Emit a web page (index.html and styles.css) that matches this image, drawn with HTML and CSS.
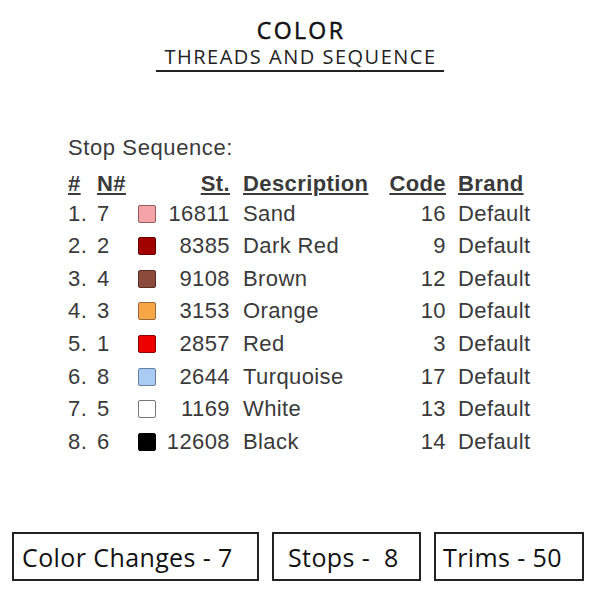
FILE: index.html
```html
<!DOCTYPE html>
<html>
<head>
<meta charset="utf-8">
<link rel="stylesheet" href="styles.css">
</head>
<body>
<div class="page">
  <header class="title">
    <div class="title-main">COLOR</div>
    <div class="title-sub">THREADS AND SEQUENCE</div>
  </header>

  <section class="seq">
    <div class="seq-label">Stop Sequence:</div>
    <div class="grid">
      <div class="h c1">#</div><div class="h c2">N#</div><div class="c3"></div><div class="h c4">St.</div><div class="h c5">Description</div><div class="h c6">Code</div><div class="h c7">Brand</div>

      <div class="c1">1.</div><div class="c2">7</div><div class="c3"><span class="sw sand"></span></div><div class="c4">16811</div><div class="c5">Sand</div><div class="c6">16</div><div class="c7">Default</div>
      <div class="c1">2.</div><div class="c2">2</div><div class="c3"><span class="sw darkred"></span></div><div class="c4">8385</div><div class="c5">Dark Red</div><div class="c6">9</div><div class="c7">Default</div>
      <div class="c1">3.</div><div class="c2">4</div><div class="c3"><span class="sw brown"></span></div><div class="c4">9108</div><div class="c5">Brown</div><div class="c6">12</div><div class="c7">Default</div>
      <div class="c1">4.</div><div class="c2">3</div><div class="c3"><span class="sw orange"></span></div><div class="c4">3153</div><div class="c5">Orange</div><div class="c6">10</div><div class="c7">Default</div>
      <div class="c1">5.</div><div class="c2">1</div><div class="c3"><span class="sw red"></span></div><div class="c4">2857</div><div class="c5">Red</div><div class="c6">3</div><div class="c7">Default</div>
      <div class="c1">6.</div><div class="c2">8</div><div class="c3"><span class="sw turq"></span></div><div class="c4">2644</div><div class="c5">Turquoise</div><div class="c6">17</div><div class="c7">Default</div>
      <div class="c1">7.</div><div class="c2">5</div><div class="c3"><span class="sw white"></span></div><div class="c4">1169</div><div class="c5">White</div><div class="c6">13</div><div class="c7">Default</div>
      <div class="c1">8.</div><div class="c2">6</div><div class="c3"><span class="sw black"></span></div><div class="c4">12608</div><div class="c5">Black</div><div class="c6">14</div><div class="c7">Default</div>
    </div>
  </section>

  <footer class="stats">
    <div class="box box-wide">Color Changes - 7</div>
    <div class="box box-mid">Stops -&nbsp; 8</div>
    <div class="box box-last">Trims - 50</div>
  </footer>
</div>
</body>
</html>
```

FILE: styles.css
```css
html, body {
  margin: 0;
  padding: 0;
  background: #ffffff;
}

.page {
  width: 600px;
  height: 600px;
  display: flex;
  flex-direction: column;
  font-family: "Open Sans", "Liberation Sans", sans-serif;
  color: #1a1a1a;
}

.title {
  display: flex;
  flex-direction: column;
  align-items: center;
  padding-top: 16px;
}

.title-main {
  font-size: 23px;
  line-height: 28px;
  font-weight: 400;
  color: #111;
  -webkit-text-stroke: 0.5px #111;
  letter-spacing: 2.4px;
  padding-left: 2px;
}

.title-sub {
  font-size: 20px;
  line-height: 25px;
  letter-spacing: 1.5px;
  color: #222;
  padding: 0 7px 1px 8px;
  border-bottom: 2px solid #222;
}

.seq {
  margin-top: 63px;
  padding-left: 68px;
  font-family: "Liberation Sans", Arial, sans-serif;
  color: #3a3a3a;
}

.seq-label {
  font-size: 22px;
  line-height: 26px;
  letter-spacing: 0.6px;
}

.grid {
  display: grid;
  grid-template-columns: 29px 40px 23px 70px 145px 71px auto;
  grid-template-rows: 27.4px;
  grid-auto-rows: 32.6px;
  align-items: center;
  margin-top: 9px;
  font-size: 22px;
  letter-spacing: 0.4px;
}

.h {
  font-weight: bold;
  text-decoration: underline;
  text-underline-offset: 2px;
}

.c4, .c6 { text-align: right; }
.c5 { padding-left: 13px; }
.c7 { padding-left: 12px; }

.c3 { display: flex; align-items: center; }

.sw {
  display: block;
  width: 16px;
  height: 16px;
  margin-left: 1px;
  border: 1.5px solid #555;
  border-radius: 2px;
}
.sand { background: #f4a3a8; border-color: #9a5a5e; }
.darkred { background: #a00000; border-color: #6a0000; }
.brown { background: #8b4a3c; border-color: #5a2e25; }
.orange { background: #f6a646; border-color: #9a6a3a; }
.red { background: #ee0000; border-color: #8a0000; }
.turq { background: #a9ccf4; border-color: #6680a0; }
.white { background: #ffffff; border-color: #777; }
.black { background: #000000; border-color: #000; }

.stats {
  margin-top: auto;
  margin-bottom: 19px;
  display: flex;
  gap: 13px;
  padding-left: 12px;
}

.box {
  box-sizing: border-box;
  height: 49px;
  border: 2px solid #222;
  display: flex;
  align-items: center;
  font-size: 25px;
  color: #111;
  letter-spacing: 0.4px;
}
.box-wide { width: 247px; padding-left: 8px; }
.box-mid { width: 149px; padding-left: 14px; }
.box-last { width: 150px; padding-left: 7px; }
```
